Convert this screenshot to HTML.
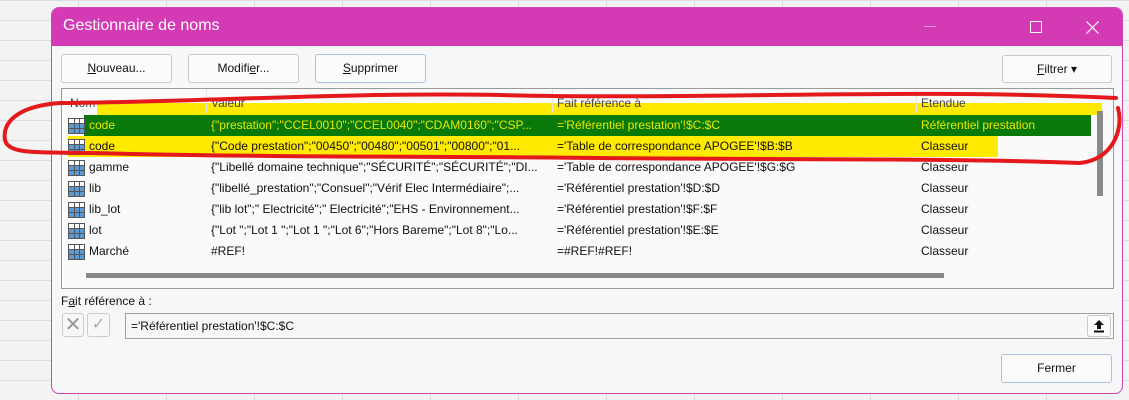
<!DOCTYPE html>
<html><head><meta charset="utf-8"><style>
*{margin:0;padding:0;box-sizing:border-box}
body{width:1129px;height:400px;overflow:hidden;background:#f3f3f3;font-family:"Liberation Sans",sans-serif;font-size:12px;color:#111;position:relative;
background-image:linear-gradient(#dcdcdc 1px,transparent 1px),linear-gradient(90deg,#dcdcdc 1px,transparent 1px);background-size:88px 20px;background-position:78px 0}
.abs{position:absolute}
#dlg{left:51px;top:7px;width:1072px;height:387px;background:#f7f7f7;border:1px solid #cf45b4;border-radius:8px;overflow:hidden}
#title{left:0;top:0;width:1072px;height:38px;background:#d43ab3;color:#fff;font-size:16px;padding:9px 11px}
.btn{border:1px solid #c9c9c9;border-radius:3px;background:#fbfbfb;text-align:center;font-size:12px;line-height:26px}
#list{left:61px;top:88px;width:1053px;height:201px;border:1px solid #9a9a9a;background:#fafafa;overflow:hidden}
.row{position:absolute;left:0;height:21px;width:1051px;font-size:12px;line-height:21px}
.row span{position:absolute;white-space:nowrap}
.ic{position:absolute;left:6px;top:3px;width:17px;height:16px;border:1px solid #555;
background:linear-gradient(90deg,transparent 5px,#555 5px,#555 6px,transparent 6px,transparent 10px,#555 10px,#555 11px,transparent 11px),linear-gradient(#fff 4px,#555 4px,#555 5px,#5b9bd5 5px,#5b9bd5 9px,#555 9px,#555 10px,#5b9bd5 10px)}
</style></head><body>
<div id="dlg" class="abs">
<div id="title" class="abs">Gestionnaire de noms</div>
<div class="abs" style="left:872px;top:18px;width:12px;height:1px;background:#e29ad4"></div>
<div class="abs" style="left:978px;top:13px;width:12px;height:12px;border:1px solid #fff"></div>
<svg class="abs" style="left:1034px;top:13px" width="13" height="13"><path d="M0.5 0.5L12.5 12.5M12.5 0.5L0.5 12.5" stroke="#fff" stroke-width="1.2"/></svg>
</div>
<div class="abs btn" style="left:61px;top:54px;width:111px;height:29px"><u>N</u>ouveau...</div>
<div class="abs btn" style="left:188px;top:54px;width:111px;height:29px">Modifi<u>e</u>r...</div>
<div class="abs btn" style="left:315px;top:54px;width:111px;height:29px;border-color:#a8c4e0"><u>S</u>upprimer</div>
<div class="abs btn" style="left:1002px;top:55px;width:110px;height:28px"><u>F</u>iltrer ▾</div>
<div id="list" class="abs">
<div class="abs" style="left:35px;top:14px;width:1005px;height:12px;background:#ffea00"></div>
<div class="row" style="top:4px;color:#444"><span style="left:8px">Nom</span><span style="left:149px">Valeur</span><span style="left:495px">Fait référence à</span><span style="left:859px">Etendue</span></div>
<div class="abs" style="left:144px;top:0;width:1px;height:24px;background:#e5e5e5"></div>
<div class="abs" style="left:490px;top:0;width:1px;height:24px;background:#e5e5e5"></div>
<div class="abs" style="left:854px;top:0;width:1px;height:24px;background:#e5e5e5"></div>
<div class="abs" style="left:6px;top:47px;width:930px;height:21px;background:#ffea00"></div>
<div class="abs" style="left:22px;top:26px;width:1007px;height:21px;background:#097a09"></div>
<div class="row" style="top:26px;color:#e8e800"><i class="ic"></i><span style="left:27px">code</span><span style="left:149px">{"prestation";"CCEL0010";"CCEL0040";"CDAM0160";"CSP...</span><span style="left:495px">='Référentiel prestation'!$C:$C</span><span style="left:859px">Référentiel prestation</span></div>
<div class="row" style="top:47px"><i class="ic"></i><span style="left:27px">code</span><span style="left:149px">{"Code prestation";"00450";"00480";"00501";"00800";"01...</span><span style="left:495px">='Table de correspondance APOGEE'!$B:$B</span><span style="left:859px">Classeur</span></div>
<div class="row" style="top:68px"><i class="ic"></i><span style="left:27px">gamme</span><span style="left:149px">{"Libellé domaine technique";"SÉCURITÉ";"SÉCURITÉ";"DI...</span><span style="left:495px">='Table de correspondance APOGEE'!$G:$G</span><span style="left:859px">Classeur</span></div>
<div class="row" style="top:89px"><i class="ic"></i><span style="left:27px">lib</span><span style="left:149px">{"libellé_prestation";"Consuel";"Vérif Elec Intermédiaire";...</span><span style="left:495px">='Référentiel prestation'!$D:$D</span><span style="left:859px">Classeur</span></div>
<div class="row" style="top:110px"><i class="ic"></i><span style="left:27px">lib_lot</span><span style="left:149px">{"lib lot";" Electricité";" Electricité";"EHS - Environnement...</span><span style="left:495px">='Référentiel prestation'!$F:$F</span><span style="left:859px">Classeur</span></div>
<div class="row" style="top:131px"><i class="ic"></i><span style="left:27px">lot</span><span style="left:149px">{"Lot ";"Lot 1 ";"Lot 1 ";"Lot 6";"Hors Bareme";"Lot 8";"Lo...</span><span style="left:495px">='Référentiel prestation'!$E:$E</span><span style="left:859px">Classeur</span></div>
<div class="row" style="top:152px"><i class="ic"></i><span style="left:27px">Marché</span><span style="left:149px">#REF!</span><span style="left:495px">=#REF!#REF!</span><span style="left:859px">Classeur</span></div>
<div class="abs" style="left:1035px;top:22px;width:6px;height:85px;background:#8a8a8a"></div>
<div class="abs" style="left:24px;top:184px;width:858px;height:5px;background:#8a8a8a"></div>
</div>
<div class="abs" style="left:61px;top:294px;font-size:12px">F<u>a</u>it référence à :</div>
<div class="abs" style="left:62px;top:313px;width:22px;height:24px;border:1px solid #ccc;border-radius:3px;color:#999;font-size:20px;text-align:center;line-height:22px">✕</div>
<div class="abs" style="left:87px;top:313px;width:23px;height:24px;border:1px solid #ccc;border-radius:3px;color:#aaa;font-size:16px;text-align:center;line-height:22px">✓</div>
<div class="abs" style="left:125px;top:313px;width:989px;height:26px;border:1px solid #a0a0a0;background:#f7f7f7;padding:5px 5px;font-size:12px">='Référentiel prestation'!$C:$C</div>
<div class="abs btn" style="left:1087px;top:315px;width:24px;height:22px"></div>
<svg class="abs" style="left:1093px;top:319px" width="12" height="14"><path d="M6 1L11 6H8V10H4V6H1Z" fill="#111"/><rect x="1" y="11.5" width="10" height="2" fill="#111"/></svg>
<div class="abs btn" style="left:1001px;top:354px;width:111px;height:29px;border-color:#a8c4e0">Fermer</div>
<svg class="abs" style="left:0;top:0" width="1129" height="400"><path d="M1116 98 C900 88 700 100 500 95 C350 92 200 102 60 103 C18 106 2 122 5 140 C8 155 40 152 90 153 C300 158 450 156 600 158 C800 160 950 158 1080 163 C1112 160 1124 130 1118 108" fill="none" stroke="#e4191c" stroke-width="4" stroke-linecap="round"/></svg>
</body></html>
